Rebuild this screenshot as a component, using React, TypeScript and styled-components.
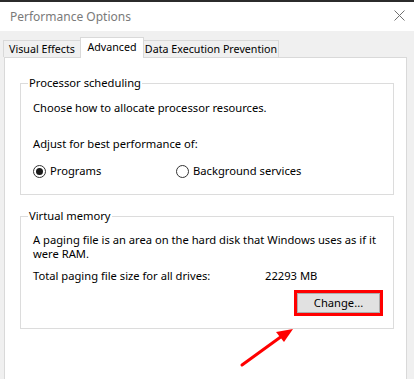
import React from "react";
import styled, { createGlobalStyle } from "styled-components";

const GlobalStyle = createGlobalStyle`
  body {
    margin: 0;
    font-family: "Noto Sans", "DejaVu Sans", sans-serif;
    color: #000;
  }
`;

const PerformanceOptions = () => {
  return (
    <Window>
      <GlobalStyle />
      <TitleBar>
        <span>Performance Options</span>
        <CloseIcon width="11" height="11" viewBox="0 0 11 11">
          <path d="M0.5 0.5 L10.5 10.5 M10.5 0.5 L0.5 10.5" stroke="#707070" strokeWidth="1" />
        </CloseIcon>
      </TitleBar>
      <DialogBody>
        <TabStrip>
          <Tab $w={78}>Visual Effects</Tab>
          <Tab $w={64} $active>
            Advanced
          </Tab>
          <Tab $w={136}>Data Execution Prevention</Tab>
        </TabStrip>
        <Panel>
          <Group $bottom={16}>
            <Legend>Processor scheduling</Legend>
            <Line>Choose how to allocate processor resources.</Line>
            <Line $top={22}>Adjust for best performance of:</Line>
            <RadioRow>
              <RadioOption $w={143}>
                <Radio $checked />
                Programs
              </RadioOption>
              <RadioOption>
                <Radio />
                Background services
              </RadioOption>
            </RadioRow>
          </Group>
          <Group $gap={13} $top={9} $bottom={12}>
            <Legend>Virtual memory</Legend>
            <Line>
              A paging file is an area on the hard disk that Windows uses as if it
              <br />
              were RAM.
            </Line>
            <TotalRow>
              <TotalLabel>Total paging file size for all drives:</TotalLabel>
              <span>22293 MB</span>
            </TotalRow>
            <ButtonRow>
              <Highlight>
                <Button>Change...</Button>
              </Highlight>
            </ButtonRow>
          </Group>
        </Panel>
      </DialogBody>
      <Arrow width="60" height="44" viewBox="0 0 60 44">
        <path d="M4 39 L44 10" stroke="#f00" strokeWidth="3" strokeLinecap="round" />
        <path d="M55 3 L38 6 L46 16 Z" fill="#f00" />
      </Arrow>
    </Window>
  );
};

const Window = styled.div`
  position: relative;
  width: 414px;
  height: 379px;
  box-sizing: border-box;
  overflow: hidden;
  border-top: 2px solid #2b2b2b;
  background: #fff;
  display: flex;
  flex-direction: column;
  font-size: 11.2px;
  white-space: nowrap;
`;

const TitleBar = styled.div`
  flex: none;
  height: 29px;
  display: flex;
  align-items: center;
  justify-content: space-between;
  padding: 0 9px 0 10px;
  font-size: 12px;
  color: #7a7a7a;
`;

const CloseIcon = styled.svg`
  display: block;
  margin-top: -2px;
`;

const DialogBody = styled.div`
  flex: 1;
  display: flex;
  flex-direction: column;
  background: #f0f0f0;
  padding: 0 7px 0 4px;
`;

const TabStrip = styled.div`
  display: flex;
  align-items: flex-end;
  padding-top: 6px;
  margin-left: -1px;
`;

const Tab = styled.div<{ $active?: boolean; $w: number }>`
  box-sizing: border-box;
  width: ${(p) => p.$w}px;
  height: ${(p) => (p.$active ? 21 : 17)}px;
  margin-bottom: ${(p) => (p.$active ? -1 : 0)}px;
  margin-right: -1px;
  display: flex;
  align-items: center;
  justify-content: center;
  padding-bottom: ${(p) => (p.$active ? 3 : 0)}px;
  font-size: 10.7px;
  border: 1px solid #d9d9d9;
  border-bottom: none;
  background: ${(p) => (p.$active ? "#fff" : "#f0f0f0")};
  position: ${(p) => (p.$active ? "relative" : "static")};
  z-index: ${(p) => (p.$active ? 1 : 0)};
`;

const Panel = styled.div`
  flex: 1;
  background: #fff;
  border: 1px solid #d9d9d9;
  border-bottom: none;
  padding: 17px 12px 0 15px;
`;

const Group = styled.fieldset<{ $gap?: number; $top?: number; $bottom?: number }>`
  margin: ${(p) => p.$gap ?? 0}px 0 0 0;
  padding: ${(p) => p.$top ?? 10}px 10px ${(p) => p.$bottom ?? 17}px 12px;
  border: 1px solid #dcdcdc;
  min-width: 0;
`;

const Legend = styled.legend`
  line-height: 16px;
  padding: 0 1px;
  margin-left: -5px;
`;

const Line = styled.div<{ $top?: number }>`
  line-height: 14px;
  margin-top: ${(p) => p.$top ?? 0}px;
`;

const RadioRow = styled.div`
  display: flex;
  margin-top: 13px;
  line-height: 14px;
`;

const RadioOption = styled.label<{ $w?: number }>`
  display: flex;
  align-items: center;
  gap: 4px;
  width: ${(p) => (p.$w ? `${p.$w}px` : "auto")};
`;

const Radio = styled.span<{ $checked?: boolean }>`
  box-sizing: border-box;
  width: 13px;
  height: 13px;
  border-radius: 50%;
  border: 1px solid #333;
  display: flex;
  align-items: center;
  justify-content: center;

  &::after {
    content: "";
    width: 7px;
    height: 7px;
    border-radius: 50%;
    background: ${(p) => (p.$checked ? "#1a1a1a" : "transparent")};
  }
`;

const TotalRow = styled.div`
  display: flex;
  margin-top: 8px;
  line-height: 14px;
`;

const TotalLabel = styled.span`
  width: 232px;
`;

const ButtonRow = styled.div`
  display: flex;
  justify-content: flex-end;
  margin-top: 7px;
`;

const Highlight = styled.div`
  border: 3px solid #f00;
  display: flex;
`;

const Button = styled.button`
  width: 83px;
  height: 20px;
  padding: 0;
  font-family: inherit;
  font-size: inherit;
  line-height: 1;
  color: #000;
  background: #e1e1e1;
  border: 1px solid #adadad;
`;

const Arrow = styled.svg`
  position: absolute;
  left: 238px;
  top: 324px;
`;

export default PerformanceOptions;
